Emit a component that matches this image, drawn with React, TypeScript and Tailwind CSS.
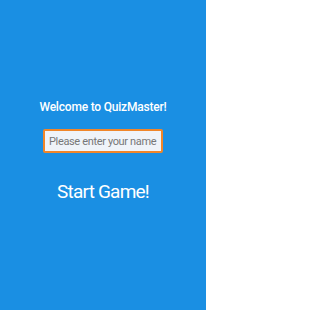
import React, { useState } from 'react';

export default function App() {
  const [name, setName] = useState('');

  return (
    <div
      className="w-[206px] h-[310px] bg-[#1a8fe3] flex flex-col items-center pt-[101px] text-white"
      style={{ fontFamily: 'Roboto, "Noto Sans", sans-serif' }}
    >
      <h1 className="text-[12px] font-medium leading-[13px] tracking-[-0.2px]">Welcome to QuizMaster!</h1>
      <input
        autoFocus
        type="text"
        value={name}
        onChange={(e) => setName(e.target.value)}
        placeholder="Please enter your name"
        className="mt-[15px] w-[120px] h-[24px] px-[4px] bg-[#eff3f9] text-gray-700 text-[11px] tracking-[-0.35px] border-2 border-[#f0862a] rounded-[2px] outline-none placeholder:text-[#777]"
      />
      <button className="mt-[29px] text-[19px] leading-[20px] tracking-[-0.8px] text-white">Start Game!</button>
    </div>
  );
}
